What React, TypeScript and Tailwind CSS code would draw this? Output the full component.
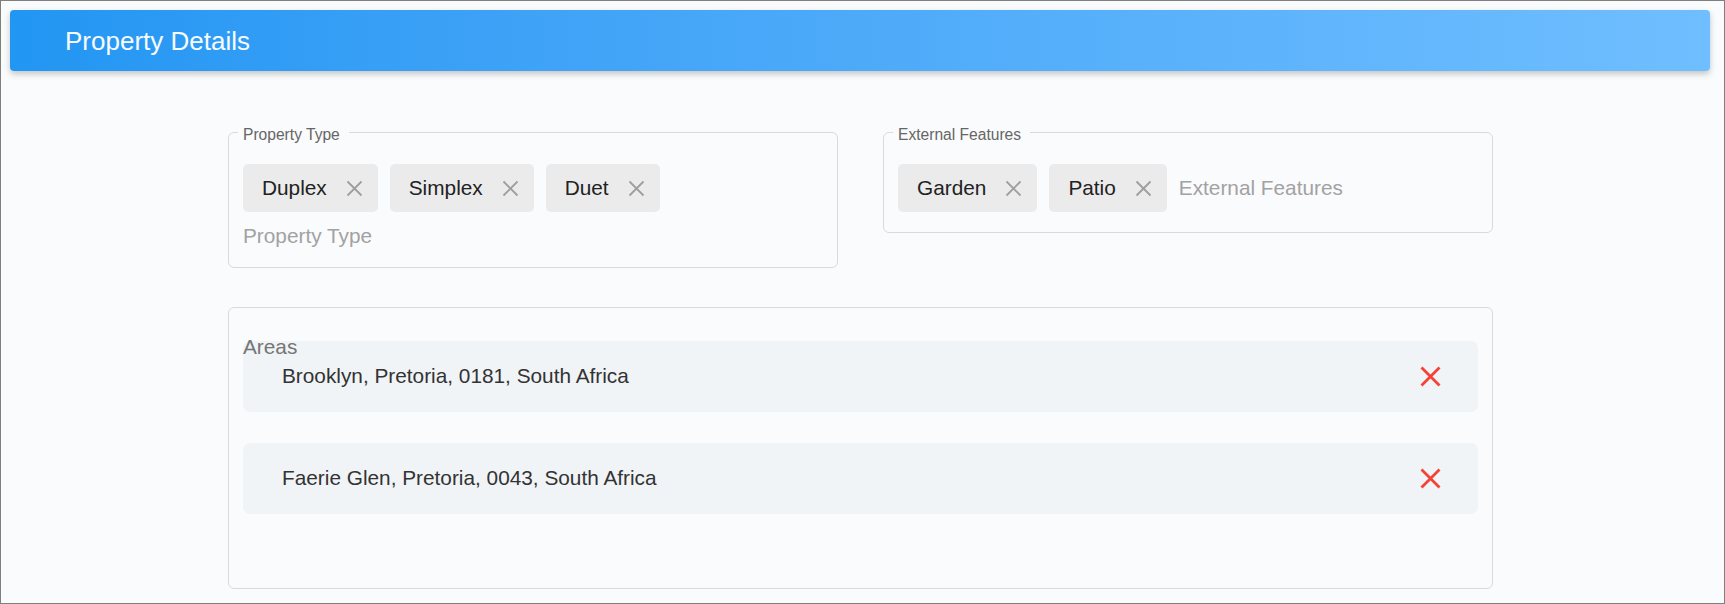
import React from "react";

const font = { fontFamily: '"Liberation Sans", Arial, sans-serif' };

function ChipX() {
  return (
    <svg width="17" height="17" viewBox="0 0 17 17" className="shrink-0">
      <path d="M1.5 1.5 L15.5 15.5 M15.5 1.5 L1.5 15.5" stroke="#9e9e9e" strokeWidth="1.8" strokeLinecap="butt" fill="none" />
    </svg>
  );
}

function RedX() {
  return (
    <svg width="21" height="21" viewBox="0 0 21 21" className="shrink-0">
      <path d="M1.5 1.5 L19.5 19.5 M19.5 1.5 L1.5 19.5" stroke="#f44336" strokeWidth="2.8" fill="none" />
    </svg>
  );
}

function Chip({ label }: { label: string }) {
  return (
    <div className="flex h-[48px] items-center gap-[19px] rounded-[5px] bg-[#ebebeb] pl-[19px] pr-[15px]">
      <span className="text-[20.8px] leading-none text-[#222222]">{label}</span>
      <ChipX />
    </div>
  );
}

function Field({ legend, chips, placeholder, bottomPad }: { legend: string; chips: string[]; placeholder: string; bottomPad: string }) {
  return (
    <fieldset className={`rounded-[6px] border border-[#d8dadd] px-[14px] ${bottomPad}`}>
      <legend className="-ml-[5px] pl-[5px] pr-[9px] pt-[6px] text-[15.6px] leading-[18px] text-[#666666]">{legend}</legend>
      <div className="mt-[20px] flex flex-wrap items-center gap-x-[12px] gap-y-[10px]">
        {chips.map((c) => (
          <Chip key={c} label={c} />
        ))}
        <div className="flex h-[28px] min-w-[200px] flex-1 items-center text-[20.8px] leading-[28px] text-[#a2a2a2]">
          {placeholder}
        </div>
      </div>
    </fieldset>
  );
}

function AreaRow({ text }: { text: string }) {
  return (
    <div className="flex h-[71px] items-center justify-between rounded-[7px] bg-[#f1f4f7] pl-[39px] pr-[37px]">
      <span className="text-[20.8px] leading-none text-[#333333]">{text}</span>
      <RedX />
    </div>
  );
}

export default function App() {
  return (
    <div style={font} className="box-border h-[604px] w-[1725px] overflow-hidden border border-[#7f7f7f] bg-[#fafbfc]">
      <div className="ml-[9px] mt-[9px] flex h-[61px] w-[1700px] items-center rounded-[4px] bg-gradient-to-r from-[#2196f3] to-[#6fbeff] pl-[55px] shadow-[0_3px_6px_rgba(0,0,0,0.22)]">
        <span className="text-[26px] leading-none text-[#f7fbff]">Property Details</span>
      </div>

      <div className="ml-[227px] mt-[49px] w-[1265px]">
        <div className="grid grid-cols-[610px_610px] items-start gap-x-[45px]">
          <Field legend="Property Type" chips={["Duplex", "Simplex", "Duet"]} placeholder="Property Type" bottomPad="pb-[17px]" />
          <Field legend="External Features" chips={["Garden", "Patio"]} placeholder="External Features" bottomPad="pb-[20px]" />
        </div>

        <div className="mt-[39px] h-[282px] rounded-[6px] border border-[#d8dadd] px-[14px] pt-[27px]">
          <div className="h-[24px] text-[20.8px] leading-[24px] text-[#757575]">Areas</div>
          <div className="-mt-[18px] space-y-[31px]">
            <AreaRow text="Brooklyn, Pretoria, 0181, South Africa" />
            <AreaRow text="Faerie Glen, Pretoria, 0043, South Africa" />
          </div>
        </div>
      </div>
    </div>
  );
}
